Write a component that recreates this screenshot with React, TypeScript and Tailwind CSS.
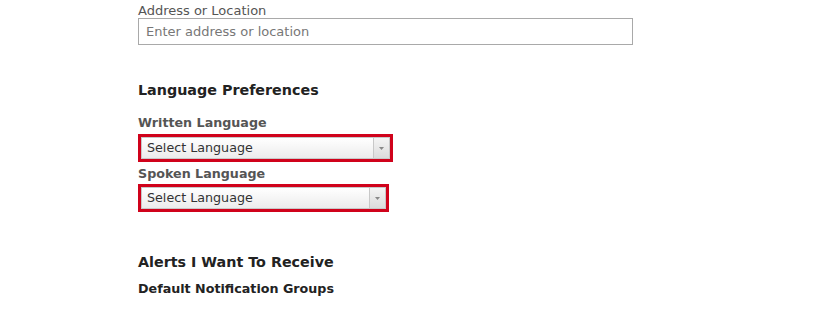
function SelectBox({ width }: { width: string }) {
  return (
    <div className={`border-[3px] border-[#d0021b] ${width}`}>
      <div className="flex h-[22px] border border-[#c8c8c8] bg-gradient-to-b from-white to-[#ececec]">
        <span className="flex-1 pl-[5px] text-[12.7px] leading-[20px] text-[#333]">Select Language</span>
        <span className="flex w-[16px] items-center justify-center border-l border-[#c8c8c8] bg-gradient-to-b from-[#f4f4f4] to-[#dcdcdc]">
          <svg width="5" height="3" viewBox="0 0 5 3">
            <path d="M0 0h5L2.5 3z" fill="#888" />
          </svg>
        </span>
      </div>
    </div>
  );
}

export default function App() {
  return (
    <div className="h-[313px] w-[830px] bg-white font-['DejaVu_Sans',Verdana,sans-serif]">
      <div className="ml-[138px] pt-[3px]">
        <label className="block text-[13px] leading-[15px] text-[#555]">Address or Location</label>
        <div className="h-[27px] w-[495px] border border-[#a9a9a9] px-[7px] text-[13px] leading-[25px] text-[#777]">
          Enter address or location
        </div>
        <h2 className="mt-[36px] text-[14.3px] font-bold leading-[18px] text-[#222]">Language Preferences</h2>
        <h3 className="mt-[16px] text-[12.7px] font-bold leading-[16px] text-[#555]">Written Language</h3>
        <div className="mt-[3px]">
          <SelectBox width="w-[255px]" />
        </div>
        <h3 className="mt-[4px] text-[12.7px] font-bold leading-[16px] text-[#555]">Spoken Language</h3>
        <div className="mt-[2px]">
          <SelectBox width="w-[251px]" />
        </div>
        <h2 className="mt-[41px] text-[14.3px] font-bold leading-[18px] text-[#222]">Alerts I Want To Receive</h2>
        <h3 className="mt-[10px] text-[12.7px] font-bold leading-[16px] text-[#222]">Default Notification Groups</h3>
      </div>
    </div>
  );
}
